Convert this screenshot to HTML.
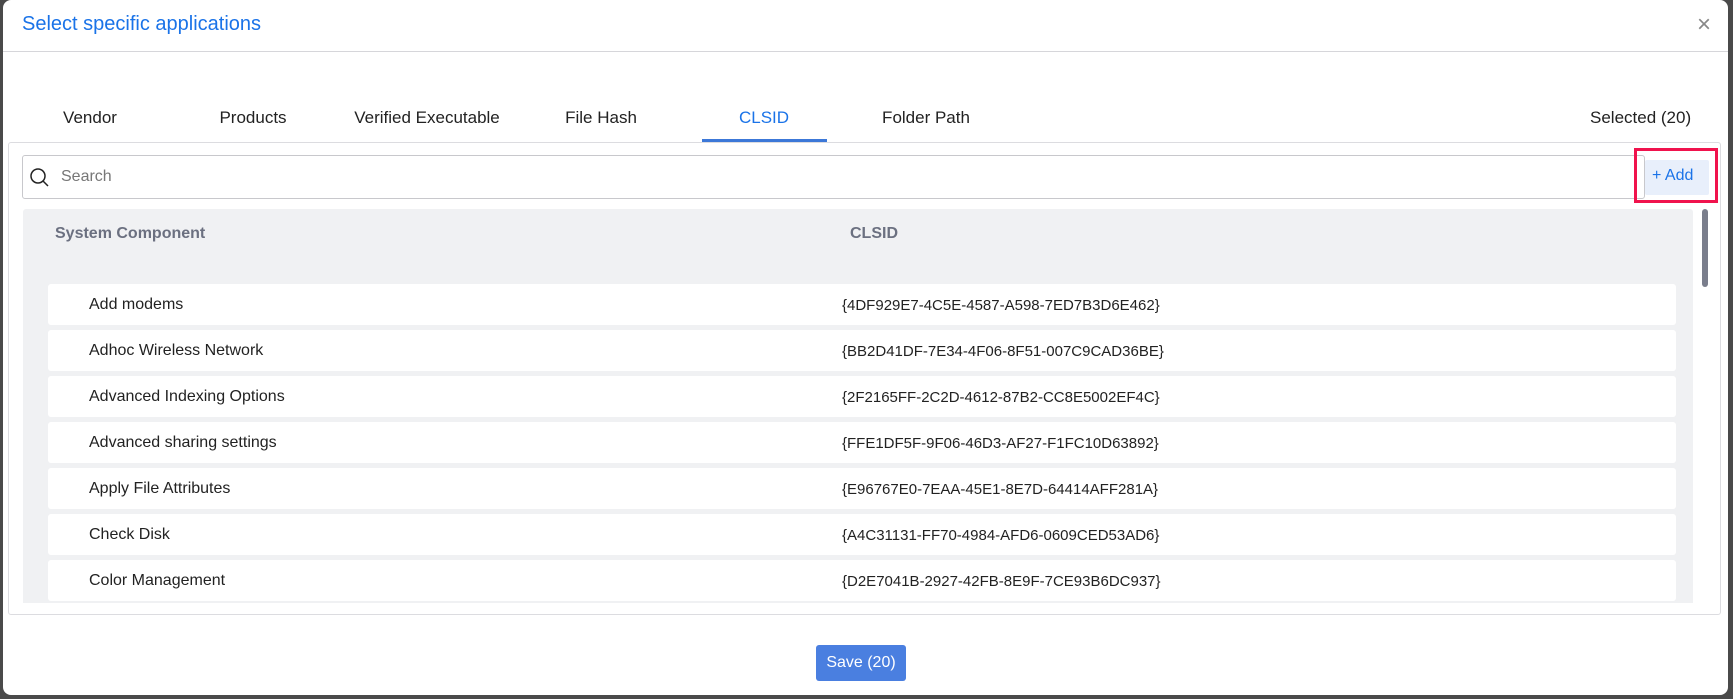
<!DOCTYPE html>
<html><head><style>
*{box-sizing:border-box;margin:0;padding:0}
body{width:1733px;height:699px;background:#4a4a4a;position:relative;overflow:hidden;font-family:"Liberation Sans",sans-serif}
.a{position:absolute}
.modal{left:3px;top:0;width:1725px;height:695px;background:#fff;border-radius:8px}
.t{font-size:17px;color:#222;top:108px;white-space:nowrap;transform:translateX(-50%)}
.row{position:absolute;left:48px;width:1628px;height:41px;background:#fff;border-radius:3px}
.row span{position:absolute;top:12px;font-size:16px;color:#222}
.row span+span{font-size:15px;top:13px}
</style></head><body>
<div class="a modal"></div>
<div class="a" style="left:22px;top:13px;font-size:20px;color:#1a73e8">Select specific applications</div>
<div class="a" style="left:1697px;top:13px;font-size:24px;color:#888;line-height:24px">×</div>
<div class="a" style="left:3px;top:51px;width:1725px;height:1px;background:#d6d6da"></div>
<div class="a t" style="left:90px">Vendor</div>
<div class="a t" style="left:253px">Products</div>
<div class="a t" style="left:427px">Verified Executable</div>
<div class="a t" style="left:601px">File Hash</div>
<div class="a t" style="left:764px;color:#1a73e8">CLSID</div>
<div class="a t" style="left:926px">Folder Path</div>
<div class="a" style="left:1590px;top:108px;font-size:17px;color:#222">Selected (20)</div>
<div class="a" style="left:8px;top:142px;width:1713px;height:473px;border:1px solid #dcdce0;border-radius:3px"></div>
<div class="a" style="left:702px;top:139px;width:125px;height:3px;background:#3c78d8"></div>
<div class="a" style="left:22px;top:155px;width:1623px;height:44px;border:1px solid #c8c8cc;border-radius:3px"></div>
<svg class="a" style="left:29px;top:167px" width="22" height="22" viewBox="0 0 22 22"><circle cx="9" cy="9" r="7" fill="none" stroke="#222" stroke-width="1.5"/><path d="M14 14L19 19" stroke="#222" stroke-width="1.5"/></svg>
<div class="a" style="left:61px;top:168px;font-size:16px;color:#777">Search</div>
<div class="a" style="left:1634px;top:148px;width:84px;height:55px;border:3px solid #f0134d"></div>
<div class="a" style="left:1645px;top:160px;width:64px;height:35px;background:#e8effb;border-radius:2px"></div>
<div class="a" style="left:1652px;top:167px;font-size:16px;color:#1a73e8">+ Add</div>
<div class="a" style="left:23px;top:209px;width:1670px;height:394px;background:#f0f1f3;border-radius:3px 3px 0 0"></div>
<div class="a" style="left:55px;top:225px;font-size:16px;font-weight:bold;color:#6b7080">System Component</div>
<div class="a" style="left:850px;top:225px;font-size:16px;font-weight:bold;color:#6b7080">CLSID</div>
<div class="a" style="left:1702px;top:209px;width:6px;height:78px;background:#7a7e8c;border-radius:3px"></div>
<div class="a" style="left:23px;top:209px;width:1670px;height:394px;overflow:hidden">
<div class="row" style="left:25px;top:75px"><span style="left:41px">Add modems</span><span style="left:794px">{4DF929E7-4C5E-4587-A598-7ED7B3D6E462}</span></div>
<div class="row" style="left:25px;top:121px"><span style="left:41px">Adhoc Wireless Network</span><span style="left:794px">{BB2D41DF-7E34-4F06-8F51-007C9CAD36BE}</span></div>
<div class="row" style="left:25px;top:167px"><span style="left:41px">Advanced Indexing Options</span><span style="left:794px">{2F2165FF-2C2D-4612-87B2-CC8E5002EF4C}</span></div>
<div class="row" style="left:25px;top:213px"><span style="left:41px">Advanced sharing settings</span><span style="left:794px">{FFE1DF5F-9F06-46D3-AF27-F1FC10D63892}</span></div>
<div class="row" style="left:25px;top:259px"><span style="left:41px">Apply File Attributes</span><span style="left:794px">{E96767E0-7EAA-45E1-8E7D-64414AFF281A}</span></div>
<div class="row" style="left:25px;top:305px"><span style="left:41px">Check Disk</span><span style="left:794px">{A4C31131-FF70-4984-AFD6-0609CED53AD6}</span></div>
<div class="row" style="left:25px;top:351px"><span style="left:41px">Color Management</span><span style="left:794px">{D2E7041B-2927-42FB-8E9F-7CE93B6DC937}</span></div>
</div>
<div class="a" style="left:816px;top:645px;width:90px;height:36px;background:#4a7fe0;border-radius:3px;color:#fff;font-size:16px;text-align:center;line-height:36px">Save (20)</div>
</body></html>
